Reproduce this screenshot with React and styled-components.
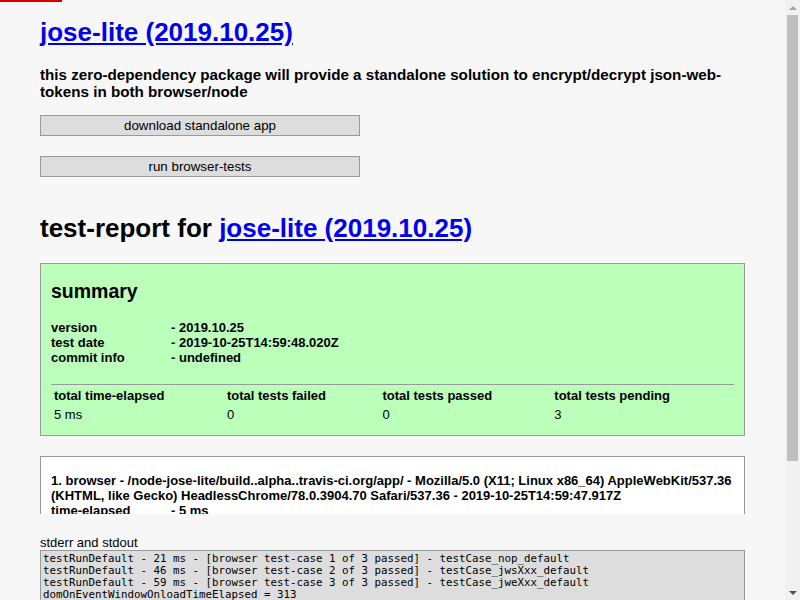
import React from "react";
import styled, { createGlobalStyle } from "styled-components";

const GlobalStyle = createGlobalStyle`
  html, body {
    margin: 0;
    height: 100%;
    overflow: hidden;
  }
  body {
    background: #f7f7f7;
    font-family: "Liberation Sans", Arial, Helvetica, sans-serif;
    font-size: 13px;
    color: #000;
  }
`;

const Viewport = styled.div`
  display: flex;
  height: 100vh;
`;

const Content = styled.div`
  flex: 1;
  min-width: 0;
  overflow: hidden;
  padding: 0 40px;
`;

const AjaxBar = styled.div`
  position: fixed;
  top: 0;
  left: 0;
  width: 62px;
  height: 2px;
  background: #dd0000;
`;

/* fake browser scrollbar on the right edge */
const Scrollbar = styled.div`
  flex: 0 0 15px;
  width: 15px;
  height: 100%;
  background: #f1f1f1;
  display: grid;
  grid-template-rows: 15px 1fr 15px;
`;

const Arrow = styled.div`
  display: flex;
  align-items: center;
  justify-content: center;
  &::before {
    content: "";
    width: 0;
    height: 0;
    border-left: 4px solid transparent;
    border-right: 4px solid transparent;
    ${(p) =>
      p.$down
        ? "border-top: 4px solid #505050;"
        : "border-bottom: 4px solid #a3a3a3;"}
  }
`;

const Track = styled.div`
  padding: 0 2px;
`;

const Thumb = styled.div`
  width: 11px;
  height: 446px;
  background: #bebebe;
`;

const Title = styled.h1`
  font-size: 26px;
  font-weight: bold;
  margin: ${(p) => p.$top || "17.4px"} 0 ${(p) => p.$bottom || "17.4px"};
`;

const Link = styled.a`
  color: #0000ee;
  text-decoration: underline;
`;

const Subtitle = styled.h3`
  font-size: 15.2px;
  margin: 14px 0 15.5px;
`;

const ButtonStack = styled.div`
  display: flex;
  flex-direction: column;
  gap: 20px;
`;

const Button = styled.button`
  width: 320px;
  padding: 2px;
  border: 1px solid #999;
  background: #ddd;
  color: #000;
  font-family: "Liberation Sans", Arial, sans-serif;
  font-size: 13.33px;
  cursor: pointer;
`;

const Card = styled.div`
  background: ${(p) => p.$bg || "#fff"};
  border: 1px solid #999;
  padding: 10px;
`;

const Summary = styled.h2`
  font-size: 19.5px;
  margin: 6px 0 16.25px;
`;

const InfoTable = styled.div`
  display: grid;
  grid-template-columns: 120px 1fr;
  font-weight: bold;
  line-height: 15px;
`;

const Rule = styled.hr`
  border: 0;
  border-top: 1px solid #999;
  margin: 19px 0 0;
`;

const TotalsTable = styled.table`
  width: 100%;
  border-spacing: 2px;
  th {
    text-align: left;
    padding: 1px;
  }
  td {
    padding: 1px;
  }
`;

const PlatformCard = styled.div`
  background: #fff;
  border: 1px solid #999;
  border-bottom: 0;
  height: 57px;
  overflow: hidden;
  padding: 0 10px;
  margin-top: 20px;
`;

const PlatformTitle = styled.div`
  font-weight: bold;
  line-height: 15px;
  margin-top: 16px;
`;

const OutputLabel = styled.div`
  margin-top: 21px;
  line-height: 15px;
`;

const Output = styled.pre`
  margin: 0;
  padding: 2px;
  background: #ddd;
  border: 1px solid #999;
  font-family: "DejaVu Sans Mono", monospace;
  font-size: 10.8px;
  line-height: 12px;
  white-space: pre-wrap;
`;

const totals = [
  ["total time-elapsed", "5 ms"],
  ["total tests failed", "0"],
  ["total tests passed", "0"],
  ["total tests pending", "3"],
];

const output = `testRunDefault - 21 ms - [browser test-case 1 of 3 passed] - testCase_nop_default
testRunDefault - 46 ms - [browser test-case 2 of 3 passed] - testCase_jwsXxx_default
testRunDefault - 59 ms - [browser test-case 3 of 3 passed] - testCase_jweXxx_default
domOnEventWindowOnloadTimeElapsed = 313
`;

export default function App() {
  return (
    <>
      <GlobalStyle />
      <Viewport>
        <Content>
          <Title>
            <Link href="#">jose-lite (2019.10.25)</Link>
          </Title>
          <Subtitle>
            this zero-dependency package will provide a standalone solution to
            encrypt/decrypt json-web-tokens in both browser/node
          </Subtitle>
          <ButtonStack>
            <Button>download standalone app</Button>
            <Button>run browser-tests</Button>
          </ButtonStack>
          <Title $top="35.7px" $bottom="19.4px">
            test-report for <Link href="#">jose-lite (2019.10.25)</Link>
          </Title>
          <Card $bg="#bbffbb">
            <Summary>summary</Summary>
            <InfoTable>
              <span>version</span>
              <span>- 2019.10.25</span>
              <span>test date</span>
              <span>- 2019-10-25T14:59:48.020Z</span>
              <span>commit info</span>
              <span>- undefined</span>
            </InfoTable>
            <Rule />
            <TotalsTable>
              <thead>
                <tr>
                  {totals.map(([k]) => (
                    <th key={k}>{k}</th>
                  ))}
                </tr>
              </thead>
              <tbody>
                <tr>
                  {totals.map(([k, v]) => (
                    <td key={k}>{v}</td>
                  ))}
                </tr>
              </tbody>
            </TotalsTable>
          </Card>
          <PlatformCard>
            <PlatformTitle>
              1. browser - /node-jose-lite/build..alpha..travis-ci.org/app/ -
              Mozilla/5.0 (X11; Linux x86_64) AppleWebKit/537.36 (KHTML, like
              Gecko) HeadlessChrome/78.0.3904.70 Safari/537.36 -
              2019-10-25T14:59:47.917Z
            </PlatformTitle>
            <InfoTable>
              <span>time-elapsed</span>
              <span>- 5 ms</span>
            </InfoTable>
          </PlatformCard>
          <OutputLabel>stderr and stdout</OutputLabel>
          <Output>{output}</Output>
        </Content>
        <Scrollbar>
          <Arrow />
          <Track>
            <Thumb />
          </Track>
          <Arrow $down />
        </Scrollbar>
      </Viewport>
      <AjaxBar />
    </>
  );
}
